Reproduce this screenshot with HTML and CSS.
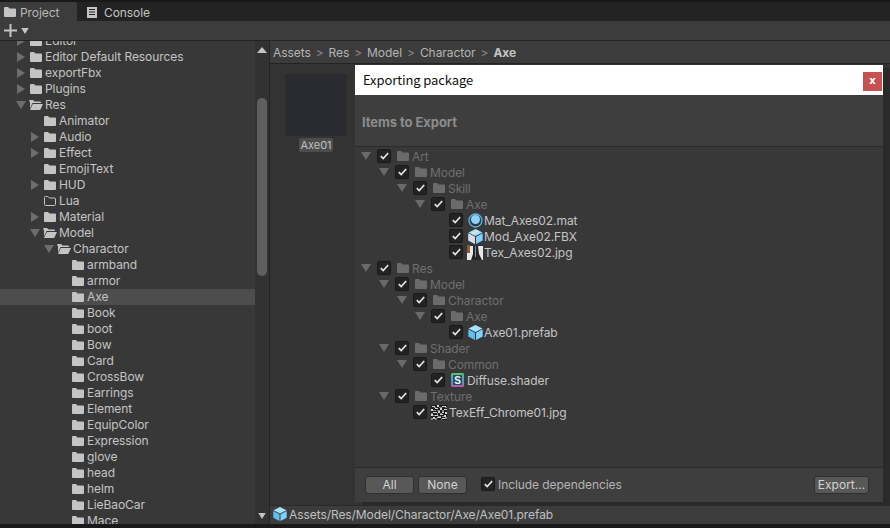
FILE: index.html
```html
<!DOCTYPE html>
<html lang="en">
<head>
	<meta charset="UTF-8">
	<title>Project - Exporting package</title>
	<link rel="stylesheet" href="styles.css">
</head>
<body>
	<svg class="defs" width="0" height="0">
		<symbol id="folder" viewBox="0 0 12 10"><path d="M0 1q0-1 1-1h3l1.5 1.5H11q1 0 1 1V9q0 1-1 1H1q-1 0-1-1z"/></symbol>
		<symbol id="folderOpen" viewBox="0 0 14 10"><path d="M0 1q0-1 1-1h3l1.500 1.500H11q1 0 1 1V3H3.500L1 8.500V2H1zM3.800 4H14l-2.800 6H1z" fill-rule="evenodd"/></symbol>
		<symbol id="right" viewBox="0 0 8 10"><path d="M0 0l8 5-8 5z"/></symbol>
		<symbol id="down" viewBox="0 0 10 8"><path d="M0 0h10L5 8z"/></symbol>
		<symbol id="check" viewBox="0 0 9 8"><path d="M.8 4.200l2.400 2.400L8.200 1" fill="none" stroke="#e4e4e4" stroke-width="1.700"/></symbol>
		<symbol id="prefab" viewBox="0 0 14 14"><path d="M7 0l6.500 3.300L7 6.600.5 3.300z" fill="#a5e2ff"/><path d="M.3 4l6.200 3.200V14L.3 10.700z" fill="#5cc0f4"/><path d="M13.700 4L7.500 7.200V14l6.200-3.300z" fill="#7fd0fa"/></symbol>
	</svg>

	<div id="tabBar">
		<div class="tab active"><svg class="tabIcon" width="12" height="10"><use href="#folder"/></svg>Project</div>
		<div class="tab">
			<svg class="tabIcon" width="11" height="11" viewBox="0 0 11 11"><path d="M0 0h10v11H0zM2 2v1h6V2zM2 4.500v1h6v-1zM2 7v1h6V7z" fill-rule="evenodd"/></svg>Console
		</div>
	</div>
	<div id="toolBar">
		<svg width="13" height="13" viewBox="0 0 13 13"><path d="M5.500 0h2v5.500H13v2H7.500V13h-2V7.500H0v-2h5.500z"/></svg>
		<svg width="8" height="6"><use href="#down"/></svg>
	</div>

	<div id="panes">
		<div id="sidebar">
			<div id="tree">
				<div class="row l1"><svg class="arrow" width="8" height="10"><use href="#right"/></svg><svg class="icon" width="12" height="10"><use href="#folder"/></svg>Editor</div>
				<div class="row l1"><svg class="arrow" width="8" height="10"><use href="#right"/></svg><svg class="icon" width="12" height="10"><use href="#folder"/></svg>Editor Default Resources</div>
				<div class="row l1"><svg class="arrow" width="8" height="10"><use href="#right"/></svg><svg class="icon" width="12" height="10"><use href="#folder"/></svg>exportFbx</div>
				<div class="row l1"><svg class="arrow" width="8" height="10"><use href="#right"/></svg><svg class="icon" width="12" height="10"><use href="#folder"/></svg>Plugins</div>
				<div class="row l1"><svg class="arrow" width="10" height="8"><use href="#down"/></svg><svg class="icon" width="14" height="10"><use href="#folderOpen"/></svg>Res</div>
				<div class="row l2"><span class="arrow"></span><svg class="icon" width="12" height="10"><use href="#folder"/></svg>Animator</div>
				<div class="row l2"><svg class="arrow" width="8" height="10"><use href="#right"/></svg><svg class="icon" width="12" height="10"><use href="#folder"/></svg>Audio</div>
				<div class="row l2"><svg class="arrow" width="8" height="10"><use href="#right"/></svg><svg class="icon" width="12" height="10"><use href="#folder"/></svg>Effect</div>
				<div class="row l2"><span class="arrow"></span><svg class="icon" width="12" height="10"><use href="#folder"/></svg>EmojiText</div>
				<div class="row l2"><svg class="arrow" width="8" height="10"><use href="#right"/></svg><svg class="icon" width="12" height="10"><use href="#folder"/></svg>HUD</div>
				<div class="row l2"><span class="arrow"></span><svg class="icon hollow" width="12" height="10" viewBox="0 0 12 10"><path d="M.5 1.500q0-1 1-1h2.300l1.500 1.500h5.200q1 0 1 1v5.500q0 1-1 1h-9q-1 0-1-1z"/></svg>Lua</div>
				<div class="row l2"><svg class="arrow" width="8" height="10"><use href="#right"/></svg><svg class="icon" width="12" height="10"><use href="#folder"/></svg>Material</div>
				<div class="row l2"><svg class="arrow" width="10" height="8"><use href="#down"/></svg><svg class="icon" width="14" height="10"><use href="#folderOpen"/></svg>Model</div>
				<div class="row l3"><svg class="arrow" width="10" height="8"><use href="#down"/></svg><svg class="icon" width="14" height="10"><use href="#folderOpen"/></svg>Charactor</div>
				<div class="row l4"><span class="arrow"></span><svg class="icon" width="12" height="10"><use href="#folder"/></svg>armband</div>
				<div class="row l4"><span class="arrow"></span><svg class="icon" width="12" height="10"><use href="#folder"/></svg>armor</div>
				<div class="row l4 selected"><span class="arrow"></span><svg class="icon" width="12" height="10"><use href="#folder"/></svg>Axe</div>
				<div class="row l4"><span class="arrow"></span><svg class="icon" width="12" height="10"><use href="#folder"/></svg>Book</div>
				<div class="row l4"><span class="arrow"></span><svg class="icon" width="12" height="10"><use href="#folder"/></svg>boot</div>
				<div class="row l4"><span class="arrow"></span><svg class="icon" width="12" height="10"><use href="#folder"/></svg>Bow</div>
				<div class="row l4"><span class="arrow"></span><svg class="icon" width="12" height="10"><use href="#folder"/></svg>Card</div>
				<div class="row l4"><span class="arrow"></span><svg class="icon" width="12" height="10"><use href="#folder"/></svg>CrossBow</div>
				<div class="row l4"><span class="arrow"></span><svg class="icon" width="12" height="10"><use href="#folder"/></svg>Earrings</div>
				<div class="row l4"><span class="arrow"></span><svg class="icon" width="12" height="10"><use href="#folder"/></svg>Element</div>
				<div class="row l4"><span class="arrow"></span><svg class="icon" width="12" height="10"><use href="#folder"/></svg>EquipColor</div>
				<div class="row l4"><span class="arrow"></span><svg class="icon" width="12" height="10"><use href="#folder"/></svg>Expression</div>
				<div class="row l4"><span class="arrow"></span><svg class="icon" width="12" height="10"><use href="#folder"/></svg>glove</div>
				<div class="row l4"><span class="arrow"></span><svg class="icon" width="12" height="10"><use href="#folder"/></svg>head</div>
				<div class="row l4"><span class="arrow"></span><svg class="icon" width="12" height="10"><use href="#folder"/></svg>helm</div>
				<div class="row l4"><span class="arrow"></span><svg class="icon" width="12" height="10"><use href="#folder"/></svg>LieBaoCar</div>
				<div class="row l4"><span class="arrow"></span><svg class="icon" width="12" height="10"><use href="#folder"/></svg>Mace</div>
			</div>
			<div id="scrollbar">
				<svg class="scrollUp" width="10" height="6" viewBox="0 0 10 6"><path d="M0 6h10L5 0z"/></svg>
				<div id="thumb"></div>
				<svg class="scrollDown" width="10" height="6"><use href="#down"/></svg>
			</div>
		</div>

		<div id="main">
			<div id="breadcrumb">
				<span>Assets</span><span class="sep">&gt;</span><span>Res</span><span class="sep">&gt;</span><span>Model</span><span class="sep">&gt;</span><span>Charactor</span><span class="sep">&gt;</span><b>Axe</b>
			</div>
			<div id="assets">
				<div class="asset">
					<div class="preview"></div>
					<div class="assetName">Axe01</div>
				</div>
			</div>
			<div id="pathBar"><svg width="14" height="14"><use href="#prefab"/></svg>Assets/Res/Model/Charactor/Axe/Axe01.prefab</div>

			<div id="dialog">
				<div id="dialogTitle">Exporting package<div id="closeBtn">x</div></div>
				<div id="dialogHead">Items to Export</div>
				<div id="exportTree">
					<div class="item dir d0"><svg class="arrow" width="10" height="8"><use href="#down"/></svg><span class="check"><svg width="9" height="8"><use href="#check"/></svg></span><svg class="icon" width="12" height="10"><use href="#folder"/></svg>Art</div>
					<div class="item dir d1"><svg class="arrow" width="10" height="8"><use href="#down"/></svg><span class="check"><svg width="9" height="8"><use href="#check"/></svg></span><svg class="icon" width="12" height="10"><use href="#folder"/></svg>Model</div>
					<div class="item dir d2"><svg class="arrow" width="10" height="8"><use href="#down"/></svg><span class="check"><svg width="9" height="8"><use href="#check"/></svg></span><svg class="icon" width="12" height="10"><use href="#folder"/></svg>Skill</div>
					<div class="item dir d3"><svg class="arrow" width="10" height="8"><use href="#down"/></svg><span class="check"><svg width="9" height="8"><use href="#check"/></svg></span><svg class="icon" width="12" height="10"><use href="#folder"/></svg>Axe</div>
					<div class="item d4"><span class="arrow"></span><span class="check"><svg width="9" height="8"><use href="#check"/></svg></span>
						<svg class="fileIcon" width="15" height="15" viewBox="0 0 15 15"><circle cx="7.500" cy="7.500" r="6.500" fill="none" stroke="#58b9ee" stroke-width="1.300"/><circle cx="7.500" cy="6.500" r="4.500" fill="#8ad4fb"/></svg>Mat_Axes02.mat</div>
					<div class="item d4"><span class="arrow"></span><span class="check"><svg width="9" height="8"><use href="#check"/></svg></span>
						<svg class="fileIcon" width="15" height="15" viewBox="0 0 14 14"><use href="#prefab"/><path d="M.3 4l6.200 3.200V14L.3 10.700z" fill="#d8dde0"/><path d="M9.500 1.500L3.500 4.500" fill="none" stroke="#e8e8e8" stroke-width="1.200"/></svg>Mod_Axe02.FBX</div>
					<div class="item d4"><span class="arrow"></span><span class="check"><svg width="9" height="8"><use href="#check"/></svg></span>
						<svg class="fileIcon wide" width="16" height="15" viewBox="0 0 16 15"><path d="M0 0h16v15H0z" fill="#e8e8e8"/><path d="M0 0h3v8H0z" fill="#8a5a3c"/><path d="M3 0h13v1H3z" fill="#2a3038"/><path d="M6 1h5l1 8 3 6H4l2-6z" fill="#26262a"/><path d="M8 1h1v11H8z" fill="#8a8a8a"/></svg>Tex_Axes02.jpg</div>
					<div class="item dir d0"><svg class="arrow" width="10" height="8"><use href="#down"/></svg><span class="check"><svg width="9" height="8"><use href="#check"/></svg></span><svg class="icon" width="12" height="10"><use href="#folder"/></svg>Res</div>
					<div class="item dir d1"><svg class="arrow" width="10" height="8"><use href="#down"/></svg><span class="check"><svg width="9" height="8"><use href="#check"/></svg></span><svg class="icon" width="12" height="10"><use href="#folder"/></svg>Model</div>
					<div class="item dir d2"><svg class="arrow" width="10" height="8"><use href="#down"/></svg><span class="check"><svg width="9" height="8"><use href="#check"/></svg></span><svg class="icon" width="12" height="10"><use href="#folder"/></svg>Charactor</div>
					<div class="item dir d3"><svg class="arrow" width="10" height="8"><use href="#down"/></svg><span class="check"><svg width="9" height="8"><use href="#check"/></svg></span><svg class="icon" width="12" height="10"><use href="#folder"/></svg>Axe</div>
					<div class="item d4"><span class="arrow"></span><span class="check"><svg width="9" height="8"><use href="#check"/></svg></span>
						<svg class="fileIcon" width="15" height="15" viewBox="0 0 14 14"><use href="#prefab"/></svg>Axe01.prefab</div>
					<div class="item dir d1"><svg class="arrow" width="10" height="8"><use href="#down"/></svg><span class="check"><svg width="9" height="8"><use href="#check"/></svg></span><svg class="icon" width="12" height="10"><use href="#folder"/></svg>Shader</div>
					<div class="item dir d2"><svg class="arrow" width="10" height="8"><use href="#down"/></svg><span class="check"><svg width="9" height="8"><use href="#check"/></svg></span><svg class="icon" width="12" height="10"><use href="#folder"/></svg>Common</div>
					<div class="item d3"><span class="arrow"></span><span class="check"><svg width="9" height="8"><use href="#check"/></svg></span>
						<svg class="fileIcon shader" width="13" height="14" viewBox="0 0 13 14"><defs><linearGradient id="shaderGrad" x1="0" y1="0" x2="0" y2="1"><stop offset="0" stop-color="#5fc46c"/><stop offset=".5" stop-color="#3aa6c9"/><stop offset="1" stop-color="#c7559f"/></linearGradient></defs><rect width="13" height="14" rx="1.500" fill="url(#shaderGrad)"/><rect x="2" y="2" width="9" height="10" fill="#2f4a5c"/><text x="6.500" y="11" class="shaderS">S</text></svg>Diffuse.shader</div>
					<div class="item dir d1"><svg class="arrow" width="10" height="8"><use href="#down"/></svg><span class="check"><svg width="9" height="8"><use href="#check"/></svg></span><svg class="icon" width="12" height="10"><use href="#folder"/></svg>Texture</div>
					<div class="item d2"><span class="arrow"></span><span class="check"><svg width="9" height="8"><use href="#check"/></svg></span>
						<svg class="fileIcon wide noise" width="16" height="15" viewBox="0 0 16 15"><path d="M0 0h16v15H0z" fill="#1c1c1c"/><path d="M1 1h3v1H1zM6 0h2v2H6zM11 1h4v1h-4zM0 4h2v2H0zM4 3h3v1H4zM9 3h2v2H9zM13 4h3v1h-3zM2 7h4v1H2zM7 6h2v2H7zM11 7h2v1h-2zM14 7h2v2h-2zM0 9h2v2H0zM4 10h3v1H4zM9 9h3v1H9zM13 10h2v2h-2zM2 12h2v2H2zM6 12h4v1H6zM11 13h3v1h-3z" fill="#d4d4d4"/><path d="M3 2h2v1H3zM8 2h3v1H8zM14 2h2v1h-2zM2 5h3v1H2zM6 5h3v1H6zM11 5h2v2h-2zM0 8h2v1H0zM6 8h1v2H6zM9 8h2v1H9zM2 10h2v1H2zM7 11h3v1H7zM11 11h2v1h-2zM0 13h2v2H0zM4 13h2v2H4zM10 14h1v1h-1zM14 12h2v2h-2z" fill="#8a8a8a"/></svg>TexEff_Chrome01.jpg</div>
				</div>
				<div id="dialogFoot">
					<button class="btn btnAll">All</button>
					<button class="btn btnNone">None</button>
					<span class="check footCheck"><svg width="9" height="8"><use href="#check"/></svg></span>
					<span class="footLabel">Include dependencies</span>
					<button class="btn btnExport">Export...</button>
				</div>
			</div>
		</div>
	</div>
	<div id="bottomEdge"></div>
</body>
</html>
```

FILE: styles.css
```css
* {
	box-sizing: border-box;
}
html, body {
	margin: 0;
	height: 100%;
}
body {
	width: 890px;
	height: 528px;
	overflow: hidden;
	display: flex;
	flex-direction: column;
	background-color: #191919;
	padding-top: 2px;
	font-family: Inter, "Liberation Sans", sans-serif;
	font-size: 12px;
	letter-spacing: -0.07px;
	color: #c4c4c4;
}
svg {
	fill: currentColor;
	flex: none;
}
.defs {
	position: absolute;
}

/* tabs */
#tabBar {
	height: 19px;
	display: flex;
	background-color: #232323;
	flex: none;
}
.tab {
	width: 105px;
	padding: 3px 0 0 4px;
	display: flex;
	align-items: center;
	line-height: 16px;
	color: #c4c4c4;
}
.tab.active {
	width: 77px;
	background-color: #3c3c3c;
	color: #b8b8b8;
	border-top-right-radius: 2px;
}
.tab .tabIcon {
	margin: -2px 4px 0 0;
	color: #c4c4c4;
}
.tab + .tab {
	padding-left: 10px;
}
.tab + .tab .tabIcon {
	margin-right: 6px;
}
#toolBar {
	height: 20px;
	flex: none;
	background-color: #3c3c3c;
	border-bottom: 1px solid #232323;
	display: flex;
	align-items: center;
	gap: 4px;
	padding-left: 4px;
	color: #c4c4c4;
}

/* panes */
#panes {
	flex: 1;
	display: flex;
	min-height: 0;
}
#sidebar {
	width: 270px;
	flex: none;
	display: flex;
	background-color: #383838;
	border-right: 1px solid #232323;
}
#tree {
	flex: 1;
	overflow: hidden;
	margin-top: -8px;
	clip-path: inset(8px 0 0 0);
	color: #c4c4c4;
}
.row {
	height: 16px;
	display: flex;
	align-items: center;
	white-space: nowrap;
	line-height: 14px;
}
.row .arrow {
	color: #6e6e6e;
	width: 10px;
	margin-right: 3px;
}
.row .icon {
	color: #c4c4c4;
	width: 14px;
	margin-right: 2px;
}
.row .icon.hollow {
	fill: none;
	stroke: #c4c4c4;
}
.l1 {
	padding-left: 16px;
}
.l2 {
	padding-left: 30px;
}
.l3 {
	padding-left: 44px;
}
.l4 {
	padding-left: 58px;
}
.selected {
	background-color: #4d4d4d;
}
#scrollbar {
	width: 14px;
	flex: none;
	position: relative;
	background-color: #323232;
	color: #c4c4c4;
}
#thumb {
	position: absolute;
	left: 2px;
	right: 2px;
	top: 57px;
	height: 178px;
	border-radius: 5px;
	background-color: #5f5f5f;
}
.scrollUp {
	position: absolute;
	left: 2px;
	top: 6px;
}
.scrollDown {
	position: absolute;
	left: 2px;
	bottom: 5px;
}

/* main */
#main {
	flex: 1;
	position: relative;
	display: flex;
	flex-direction: column;
	min-width: 0;
	background-color: #333333;
}
#breadcrumb {
	height: 23px;
	flex: none;
	display: flex;
	align-items: center;
	padding-left: 3px;
	background-color: #3c3c3c;
	border-bottom: 1px solid #232323;
	color: #b4b4b4;
}
#breadcrumb .sep {
	margin: 0 5px;
	color: #8a8a8a;
}
#breadcrumb b {
	font-weight: 700;
	color: #c4c4c4;
}
#assets {
	flex: 1;
	padding: 10px 0 0 15px;
}
.asset {
	width: 62px;
	display: flex;
	flex-direction: column;
	align-items: center;
}
.preview {
	width: 62px;
	height: 62px;
	background-color: #2a2b30;
	border-radius: 2px;
}
.assetName {
	margin-top: 2px;
	padding: 0 2px;
	height: 14px;
	line-height: 14px;
	font-size: 11px;
	background-color: #4d4d4d;
	border-radius: 2px;
	color: #c0c0c0;
}
#pathBar {
	height: 19px;
	flex: none;
	display: flex;
	align-items: center;
	gap: 2px;
	padding: 0 0 2px 3px;
	background-color: #3c3c3c;
	border-top: 1px solid #2a2a2a;
	color: #c0c0c0;
}
#bottomEdge {
	height: 4px;
	flex: none;
	background-color: #191919;
}

/* export dialog */
#dialog {
	position: absolute;
	left: 85px;
	top: 24px;
	width: 528px;
	height: 437px;
	display: flex;
	flex-direction: column;
	background-color: #3e3e3e;
	box-shadow: 7px 3px 0 #2a2a2a;
}
#dialogTitle {
	height: 30px;
	flex: none;
	background-color: #fff;
	color: #111;
	font-family: "Noto Sans CJK SC", "Noto Sans", sans-serif;
	font-size: 13px;
	letter-spacing: -0.1px;
	line-height: 29px;
	padding-left: 8px;
	position: relative;
}
#closeBtn {
	position: absolute;
	right: 1px;
	top: 7px;
	width: 19px;
	height: 19px;
	background-color: #c75050;
	color: #fff;
	font: 700 10px/18px "DejaVu Sans", sans-serif;
	text-align: center;
}
#dialogHead {
	height: 52px;
	flex: none;
	padding: 19px 0 0 7px;
	font-size: 13px;
	font-weight: 700;
	color: #8c8c8c;
	border-bottom: 1px solid #2a2a2a;
}
#exportTree {
	flex: 1;
	background-color: #383838;
	color: #c4c4c4;
	padding-top: 1px;
}
.item {
	height: 16px;
	display: flex;
	align-items: center;
	white-space: nowrap;
}
.item .arrow {
	width: 10px;
	margin-right: 6px;
	color: #6a6a6a;
}
.item.dir {
	color: #6f6f6f;
}
.item .icon {
	margin: 0 3px 0 6px;
	color: #6b6b6b;
}
.fileIcon {
	margin: 0 1px 0 5px;
}
.fileIcon.wide {
	margin: 0 1px 0 4px;
}
.fileIcon.noise {
	margin-right: 2px;
}
.fileIcon.shader {
	margin: 0 3px 0 6px;
}
.check {
	width: 14px;
	height: 14px;
	flex: none;
	display: flex;
	align-items: center;
	justify-content: center;
	background-color: #232323;
	border: 1px solid #191919;
	border-radius: 2px;
}
.d0 {
	padding-left: 6px;
}
.d1 {
	padding-left: 24px;
}
.d2 {
	padding-left: 42px;
}
.d3 {
	padding-left: 60px;
}
.d4 {
	padding-left: 78px;
}
.shaderS {
	font: 700 10px "Liberation Sans", sans-serif;
	fill: #e4f4ff;
	text-anchor: middle;
}
#dialogFoot {
	height: 35px;
	flex: none;
	display: flex;
	align-items: center;
	padding-left: 10px;
	background-color: #3e3e3e;
	border-top: 1px solid #2a2a2a;
}
.btn {
	height: 18px;
	padding: 0;
	background-color: #585858;
	border: 1px solid #2e2e2e;
	border-radius: 3px;
	color: #d2d2d2;
	font-family: Inter, "Liberation Sans", sans-serif;
	font-size: 12px;
	line-height: 16px;
}
.btnAll {
	width: 49px;
}
.btnNone {
	width: 49px;
	margin-left: 4px;
}
.footCheck {
	margin: -2px 0 0 14px;
}
.footLabel {
	margin: -2px 0 0 3px;
	color: #b4b4b4;
}
.btnExport {
	width: 55px;
	margin-left: auto;
	margin-right: 14px;
}
```
